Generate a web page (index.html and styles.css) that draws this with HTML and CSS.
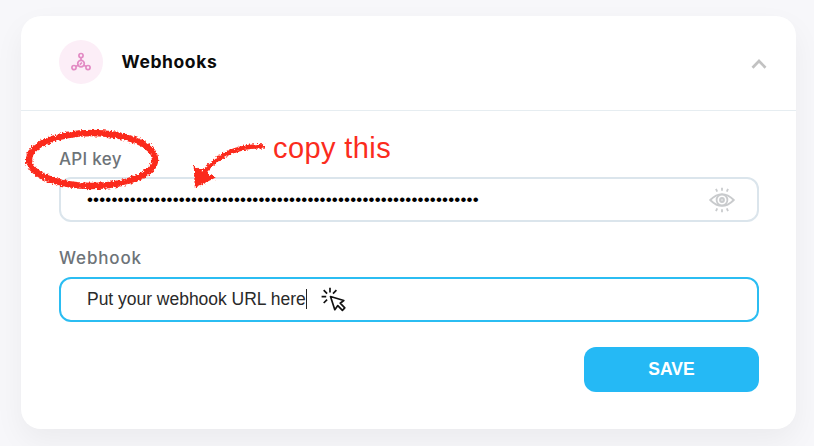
FILE: index.html
```html
<!DOCTYPE html>
<html lang="en">
<head>
    <meta charset="UTF-8">
    <meta name="viewport" content="width=device-width, initial-scale=1.0">
    <title>Webhooks</title>
    <link rel="stylesheet" href="styles.css">
</head>
<body>
    <div class="card">
        <div class="card-header">
            <span class="icon-circle">
                <svg width="22" height="20" viewBox="0 0 22 20" fill="none" stroke="#e38bc4" stroke-width="1.7">
                    <circle cx="11" cy="11.6" r="3.3"/>
                    <circle cx="11" cy="3.6" r="2.1"/>
                    <circle cx="4" cy="15.6" r="2.1"/>
                    <circle cx="18" cy="15.6" r="2.1"/>
                    <path d="M11 5.7v2.6M8.2 13.2l-2.4 1.4M13.8 13.2l2.4 1.4M9.8 12.7l2.2-2.2"/>
                </svg>
            </span>
            <h2>Webhooks</h2>
            <svg class="chevron" width="16" height="12" viewBox="0 0 16 12" fill="none" stroke="#c2c2c2" stroke-width="2.7">
                <path d="M1.5 9.7L8 3l6.5 6.7"/>
            </svg>
        </div>
        <form class="card-body">
            <label class="label-key">API key</label>
            <div class="field">
                <span class="dots">••••••••••••••••••••••••••••••••••••••••••••••••••••••••••••••••</span>
                <svg class="eye" width="26" height="26" viewBox="0 0 26 26" fill="none" stroke="#c9cbcd" stroke-width="1.8">
                    <path d="M1.2 13Q13 1.2 24.8 13Q13 24.8 1.2 13z"/>
                    <circle cx="13" cy="13" r="5.4"/>
                    <circle cx="13" cy="13" r="1.8" stroke-width="2.2"/>
                    <path d="M13 .8v3M7 1.8l1.2 2.8M19 1.8l-1.2 2.8M13 22.2v3M7 24.2l1.2-2.8M19 24.2l-1.2-2.8"/>
                </svg>
            </div>
            <label class="label-hook">Webhook</label>
            <div class="field active">
                <span class="value">Put your webhook URL here</span>
                <svg class="pointer" width="26" height="26" viewBox="0 0 26 26" fill="none" stroke="#111" stroke-width="1.7">
                    <path d="M9.5 9.5l4.3 13.2 3-4.1 4.6 4.7 2.4-2.4-4.6-4.7 3.6-2.7z" stroke-linejoin="round"/>
                    <path d="M9 .8v4.6M2.7 3.1l3.4 3.5M15.4 3.1L12 6.6M.6 9.6h4.6M2.7 16l3.4-3.4"/>
                </svg>
            </div>
            <button type="button">SAVE</button>
        </form>
    </div>

    <!-- Hand-drawn notes over the card -->
    <svg class="marks" width="814" height="446" viewBox="0 0 814 446" fill="none" stroke="#fb2c1d">
        <filter id="rough" x="-10%" y="-10%" width="120%" height="120%">
            <feTurbulence type="fractalNoise" baseFrequency="0.45" numOctaves="2" seed="4"/>
            <feDisplacementMap in="SourceGraphic" scale="5" xChannelSelector="R" yChannelSelector="G"/>
        </filter>
        <g filter="url(#rough)">
            <ellipse cx="92" cy="159.5" rx="63" ry="26.5" stroke-width="6.5"/>
            <path d="M264 146.500C238 145 219 155 204 172" stroke-width="4.5"/>
            <path d="M195 168L213 177.500L196 186z" stroke-width="2.5" fill="#fb2c1d"/>
        </g>
    </svg>
    <span class="note">copy this</span>
</body>
</html>
```
FILE: styles.css
```css
* {
    box-sizing: border-box;
}
body {
    margin: 0;
    height: 446px;
    padding: 16px 18px 0 21px;
    overflow: hidden;
    background-color: #f7f7fa;
    font-family: "Liberation Sans", Arial, sans-serif;
}
.card {
    height: 413px;
    background-color: white;
    border-radius: 20px;
    box-shadow: 0 12px 30px rgba(0, 0, 0, 0.05);
}
.card-header {
    display: flex;
    align-items: center;
    height: 95px;
    padding: 0 29px 2px 38px;
    border-bottom: 1px solid #e6edf1;
}
.icon-circle {
    display: flex;
    align-items: center;
    justify-content: center;
    width: 44px;
    height: 44px;
    border-radius: 50%;
    background-color: #fceef7;
}
h2 {
    margin: 0 auto 0 18.5px;
    font-family: Inter, sans-serif;
    font-size: 17.5px;
    font-weight: 700;
    line-height: 24px;
    letter-spacing: 0.6px;
    color: #0b0b0b;
}
.chevron {
    margin-top: 4px;
}
.card-body {
    display: flex;
    flex-direction: column;
    padding: 35px 37px 0 38px;
}
label {
    height: 31px;
    font-family: Inter, sans-serif;
    font-size: 17px;
    font-weight: 500;
    line-height: 26px;
    color: #6d7378;
}
.label-key {
    letter-spacing: 0.3px;
}
.field {
    display: flex;
    align-items: center;
    height: 45px;
    padding: 0 22px 0 26px;
    border: 2px solid #dbe5ec;
    border-radius: 12px;
}
.dots {
    margin-right: auto;
    font-size: 17px;
    letter-spacing: 0.17px;
    color: #000;
}
.label-hook {
    height: 32px;
    margin-top: 23px;
    letter-spacing: 0.85px;
}
.active {
    border-color: #2bbdf2;
}
.value {
    margin-bottom: 1px;
    border-right: 1px solid #222;
    font-size: 17.5px;
    line-height: 20px;
    letter-spacing: -0.02px;
    color: #2a2a2a;
}
.pointer {
    margin: 1px 0 0 14px;
}
button {
    align-self: flex-end;
    width: 175px;
    height: 45px;
    margin-top: 25px;
    border: none;
    border-radius: 12px;
    background-color: #25b9f5;
    color: white;
    font-family: inherit;
    font-size: 17.5px;
    font-weight: bold;
    cursor: pointer;
}
.marks {
    position: absolute;
    top: 0;
    left: 0;
    pointer-events: none;
}
.note {
    position: absolute;
    top: 131px;
    left: 273px;
    font-size: 29px;
    line-height: 34px;
    letter-spacing: 0.4px;
    white-space: nowrap;
    color: #fb2c1d;
}
```
